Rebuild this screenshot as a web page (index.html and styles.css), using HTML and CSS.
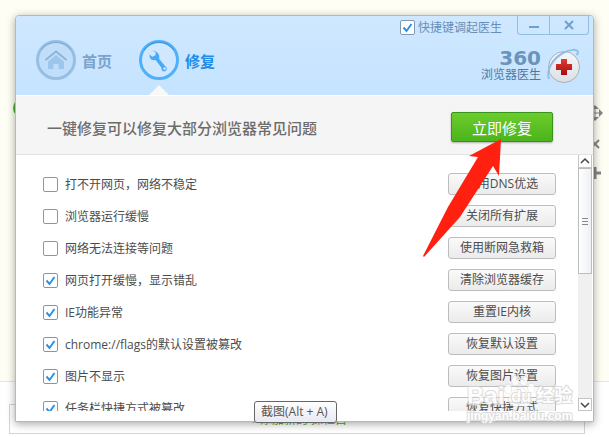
FILE: index.html
```html
<!DOCTYPE html>
<html lang="zh-CN">
<head>
    <meta charset="UTF-8">
    <meta name="viewport" content="width=device-width, initial-scale=1.0">
    <title>360浏览器医生</title>
    <link rel="stylesheet" href="styles.css">
</head>
<body>
    <!-- 底层页面 -->
    <div class="page">
        <div class="page-top">
            <span class="dot"></span>
            <svg class="side-tools" width="16" height="80" viewBox="0 0 16 80" fill="none" stroke="#858585" stroke-width="2">
                <path d="M2 9H15M8 3V15" stroke-width="1"/>
                <path d="M4 5L8 1l4 4zM4 13l4 4 4-4zM12 5l4 4-4 4z" fill="#858585" stroke="none"/>
                <path d="M4 36l8 8M12 36l-8 8"/>
                <path d="M2 69H14M8 63V75" stroke-width="3"/>
            </svg>
        </div>
        <div class="page-bottom">
            <div class="page-box">+ 添加新的 探栏目</div>
        </div>
    </div>

    <!-- 医生窗口 -->
    <div class="window">
        <header class="header">
            <nav class="nav">
                <a href="#" class="nav-item">
                    <svg class="nav-icon" width="40" height="40" viewBox="0 0 40 40">
                        <circle cx="20" cy="20" r="18.5" fill="#c0defa" stroke="#96bfe3" stroke-width="3"/>
                        <path d="M5 10A18.500 18.500 0 0 1 35 10" fill="none" stroke="#7da9cf"/>
                        <path d="M9.500 20L20 11.500L30.500 20" fill="none" stroke="#8cb5da" stroke-width="2"/>
                        <path d="M12 21.500L20 15l8 6.500V29H22.500V24h-5v5H12z" fill="#9cc6eb"/>
                    </svg>
                    <span>首页</span>
                </a>
                <a href="#" class="nav-item active">
                    <svg class="nav-icon" width="40" height="40" viewBox="0 0 40 40">
                        <circle cx="20" cy="20" r="18.500" fill="#d0e8ff" stroke="#4fb0fb" stroke-width="3"/>
                        <path d="M5 10A18.500 18.500 0 0 1 35 10" fill="none" stroke="#3c8fd8"/>
                        <path d="M13.500 10.500l3.300 1.800-.6 3.200-3 1.300-2.500-2.200c-.7 4 2 6.400 5.900 5.300l6 8.200c-.4 2.600 1.500 3.800 3.300 3.200 2-.6 2.700-3.600.6-4.800l-6.300-7.500c.8-4.600-1.700-8-6.700-8.500z" fill="#4aa9f6"/>
                        <circle cx="25.600" cy="28.600" r="1.300" fill="#d0e8ff"/>
                    </svg>
                    <span>修复</span>
                </a>
            </nav>
            <div class="header-right">
                <div class="controls">
                    <label class="hotkey"><input type="checkbox" checked>快捷键调起医生</label>
                    <div class="win-buttons">
                        <button type="button" aria-label="最小化">
                            <svg width="12" height="12" viewBox="0 0 12 12"><path d="M1 8h10" stroke="#6fa1cf" stroke-width="2"/></svg>
                        </button>
                        <button type="button" aria-label="关闭">
                            <svg width="12" height="12" viewBox="0 0 12 12"><path d="M2 2l8 8M10 2l-8 8" stroke="#6fa1cf" stroke-width="2"/></svg>
                        </button>
                    </div>
                </div>
                <div class="brand">
                    <div class="brand-text">
                        <strong>360</strong>
                        <span>浏览器医生</span>
                    </div>
                    <svg width="36" height="36" viewBox="0 0 36 36">
                        <defs>
                            <linearGradient id="ball" x1="0" y1="0" x2="0" y2="1">
                                <stop offset="0" stop-color="#f5f8fb"/>
                                <stop offset="1" stop-color="#dcdfe3"/>
                            </linearGradient>
                            <linearGradient id="cross" x1="0" y1="0" x2="0" y2="1">
                                <stop offset="0" stop-color="#e53a30"/>
                                <stop offset="1" stop-color="#a01010"/>
                            </linearGradient>
                        </defs>
                        <circle cx="19" cy="19" r="15.500" fill="url(#ball)" stroke="#a9b0b8"/>
                        <path d="M4 31C1 23 7 11 18 5C25 1 33 1 33 4c0 1-.5 2-1.500 3" fill="none" stroke="#91bfe6" stroke-width="2"/>
                        <path d="M16 11h6v5h5v6h-5v5h-6v-5h-5v-6h5z" fill="url(#cross)"/>
                    </svg>
                </div>
            </div>
        </header>

        <section class="banner">
            <h1>一键修复可以修复大部分浏览器常见问题</h1>
            <button type="button" class="btn-main">立即修复</button>
        </section>

        <main class="content">
            <ul class="list">
                <li><label><input type="checkbox">打不开网页，网络不稳定</label><button type="button" class="btn">使用DNS优选</button></li>
                <li><label><input type="checkbox">浏览器运行缓慢</label><button type="button" class="btn">关闭所有扩展</button></li>
                <li><label><input type="checkbox">网络无法连接等问题</label><button type="button" class="btn">使用断网急救箱</button></li>
                <li><label><input type="checkbox" checked>网页打开缓慢，显示错乱</label><button type="button" class="btn">清除浏览器缓存</button></li>
                <li><label><input type="checkbox" checked>IE功能异常</label><button type="button" class="btn">重置IE内核</button></li>
                <li><label><input type="checkbox" checked>chrome://flags的默认设置被篡改</label><button type="button" class="btn">恢复默认设置</button></li>
                <li><label><input type="checkbox" checked>图片不显示</label><button type="button" class="btn">恢复图片设置</button></li>
                <li><label><input type="checkbox" checked>任务栏快捷方式被篡改</label><button type="button" class="btn">恢复快捷方式</button></li>
            </ul>
            <div class="scrollbar">
                <button type="button" aria-label="向上">
                    <svg width="10" height="8" viewBox="0 0 10 8"><path d="M1 6l4-4 4 4" fill="none" stroke="#444" stroke-width="1.500"/></svg>
                </button>
                <div class="thumb"><i></i><i></i><i></i></div>
                <button type="button" class="down" aria-label="向下">
                    <svg width="10" height="8" viewBox="0 0 10 8"><path d="M1 2l4 4 4-4" fill="none" stroke="#444" stroke-width="1.500"/></svg>
                </button>
            </div>
        </main>

        <!-- 水印 -->
        <div class="watermark">
            <div class="wm-logo">
                <span class="wm-bai">Bai</span>
                <span class="paw">
                    <svg width="32" height="34" viewBox="0 0 34 34" fill="#fff" stroke="#d0d0d0">
                        <ellipse cx="4.500" cy="15" rx="3.500" ry="5"/>
                        <ellipse cx="12" cy="6" rx="3.500" ry="5"/>
                        <ellipse cx="21" cy="6" rx="3.500" ry="5"/>
                        <ellipse cx="29" cy="14" rx="3.500" ry="5"/>
                        <path d="M17 13c-5 0-6 5-9 8-5 5-3 12 3 12h12c6 0 8-7 3-12-3-3-4-8-9-8z"/>
                    </svg>
                    <b>du</b>
                </span>
                <span>经验</span>
            </div>
            <div class="wm-url">jingyan.baidu.com</div>
        </div>
    </div>

    <!-- 指向修复按钮的箭头 -->
    <svg class="arrow" width="80" height="120" viewBox="0 0 80 120">
        <path d="M78 1L46 18l9 1L25 69 0 118l1 1L37 79 70 28l6 10z" fill="#ff2010"/>
    </svg>

    <div class="tooltip">截图(Alt + A)</div>
</body>
</html>
```

FILE: styles.css
```css
* {
    margin: 0;
    padding: 0;
    box-sizing: border-box;
}

body {
    position: relative;
    height: 100vh;
    overflow: hidden;
    font-family: "Open Sans", "Noto Sans CJK SC", sans-serif;
    font-size: 12px;
    color: #4c4c4c;
}

button {
    font-family: inherit;
    cursor: pointer;
}

/* 底层页面 */
.page {
    height: 100%;
    display: flex;
    flex-direction: column;
    background: #fff;
}

.page-top {
    position: relative;
    flex: 1;
    background: #fffef4;
    border-bottom: 1px solid #e6e6e0;
}

.dot {
    position: absolute;
    left: 13px;
    top: 98px;
    width: 20px;
    height: 20px;
    border-radius: 50%;
    background: #45b535;
}

.side-tools {
    position: absolute;
    right: 6px;
    top: 104px;
}

.page-bottom {
    padding: 22px 24px 3px 9px;
}

.page-box {
    height: 30px;
    border: 1px solid #d4d4d4;
    line-height: 30px;
    padding-left: 240px;
    color: #4cae2f;
}

/* 窗口 */
.window {
    position: absolute;
    inset: 15px;
    display: flex;
    flex-direction: column;
    background: #fff;
    border: 1px solid #a9bccb;
    border-radius: 4px 4px 0 0;
    box-shadow: 0 2px 8px rgba(0, 0, 0, 0.35);
}

.header {
    display: flex;
    justify-content: space-between;
    height: 79px;
    background: linear-gradient(#cfe8ff, #c5e3ff);
    border-radius: 3px 3px 0 0;
}

.nav {
    display: flex;
    gap: 27px;
    padding: 24px 0 0 20px;
}

.nav-item {
    position: relative;
    display: flex;
    gap: 6px;
    height: 55px;
    color: #7ba3cc;
    font-size: 15px;
    font-weight: bold;
    line-height: 42px;
    text-decoration: none;
}

.nav-item.active {
    color: #1f8ce8;
}

.nav-item.active::after {
    content: '';
    position: absolute;
    left: 10px;
    bottom: 0;
    border: 10px solid transparent;
    border-top: 0;
    border-bottom-color: #f8f8f8;
}

.header-right {
    display: flex;
    flex-direction: column;
    align-items: flex-end;
    justify-content: space-between;
    padding: 0 4px 11px 0;
}

.controls {
    display: flex;
    gap: 15px;
}

.hotkey {
    display: flex;
    align-items: center;
    gap: 3px;
    padding-top: 2px;
    color: #6690b8;
}

.win-buttons {
    display: flex;
    height: 19px;
    border: 1px solid #92bde4;
    border-top: 0;
    border-radius: 0 0 4px 4px;
}

.win-buttons button {
    width: 31px;
    border: 0;
    background: none;
    line-height: 0;
}

.win-buttons button + button {
    width: 39px;
    border-left: 1px solid #92bde4;
}

.brand {
    display: flex;
    align-items: center;
    gap: 4px;
    padding-right: 8px;
}

.brand-text {
    display: flex;
    flex-direction: column;
    align-items: flex-end;
    color: #50779c;
    line-height: 17px;
}

.brand-text strong {
    font-family: "DejaVu Sans", sans-serif;
    font-size: 20px;
    line-height: 16px;
    color: #6b94ba;
}

/* 复选框 */
input[type="checkbox"] {
    appearance: none;
    width: 15px;
    height: 15px;
    border: 1px solid #7e99b2;
    border-radius: 2px;
    background: #fff;
}

input[type="checkbox"]:checked {
    background: #fff url("data:image/svg+xml,%3Csvg xmlns='http://www.w3.org/2000/svg' viewBox='0 0 13 13'%3E%3Cpath d='M2.500 6.500l3 3.500 5-7' fill='none' stroke='%232b90ee' stroke-width='2'/%3E%3C/svg%3E");
}

/* 一键修复 */
.banner {
    display: flex;
    align-items: center;
    justify-content: space-between;
    height: 60px;
    padding: 4px 40px 0 31px;
    background: #f5f5f5;
    border-top: 1px solid #fff;
    border-bottom: 1px solid #e2e2e2;
}

.banner h1 {
    font-size: 15px;
    font-weight: 500;
    color: #6c6c6c;
}

.btn-main {
    width: 102px;
    height: 30px;
    border: 1px solid #35941a;
    border-radius: 2px;
    background: linear-gradient(#6ccc2c, #4bb41c);
    box-shadow: 0 1px 2px rgba(0, 0, 0, 0.3);
    color: #fff;
    font-size: 15px;
}

/* 问题列表 */
.content {
    flex: 1;
    min-height: 0;
    display: flex;
    margin: 0 1px 10px 0;
}

.list {
    flex: 1;
    display: flex;
    flex-direction: column;
    gap: 10px;
    padding: 18px 22px 0 27px;
    overflow: hidden;
    list-style: none;
}

.list li {
    display: flex;
    flex-shrink: 0;
    align-items: center;
    justify-content: space-between;
    height: 22px;
}

.list label {
    display: flex;
    align-items: center;
    gap: 7px;
}

.btn {
    width: 108px;
    height: 22px;
    border: 1px solid #bdbdbd;
    border-radius: 3px;
    background: linear-gradient(#fafafa, #ebebeb);
    color: #4c4c4c;
    font-size: 12px;
    line-height: 20px;
}

.scrollbar {
    display: flex;
    flex-direction: column;
    width: 14px;
    background: #f0f0f0;
}

.scrollbar button {
    height: 13px;
    border: 1px solid #c4c4c4;
    border-top: 0;
    background: #fff;
    line-height: 0;
}

.scrollbar .down {
    margin-top: auto;
    border-top: 1px solid #c4c4c4;
}

.thumb {
    display: flex;
    flex-direction: column;
    align-items: center;
    justify-content: center;
    gap: 2px;
    height: 106px;
    border: 1px solid #bcbcbc;
    background: linear-gradient(to right, #fff, #eef0f4);
}

.thumb i {
    width: 6px;
    height: 1px;
    background: #888;
}

/* 水印 */
.watermark {
    position: absolute;
    right: 14px;
    bottom: -3px;
    width: 112px;
    opacity: 0.8;
    color: #fff;
    font-weight: bold;
    -webkit-text-stroke: 2px #d4d4d4;
    paint-order: stroke fill;
    pointer-events: none;
}

.wm-logo {
    display: flex;
    align-items: flex-end;
    font-family: "Liberation Sans", "Noto Sans CJK SC", sans-serif;
    font-size: 18px;
    line-height: 24px;
}

.wm-bai {
    font-size: 24px;
}

.paw {
    position: relative;
    line-height: 0;
}

.paw b {
    position: absolute;
    left: 7px;
    bottom: 11px;
    font-size: 16px;
}

.wm-url {
    font-family: "Liberation Sans", sans-serif;
    font-size: 12px;
    line-height: 16px;
}

/* 箭头 */
.arrow {
    position: absolute;
    right: 106px;
    top: 138px;
}

/* 提示 */
.tooltip {
    position: absolute;
    left: 254px;
    bottom: 14px;
    padding: 0 8px 0 6px;
    border: 1px solid #666;
    border-radius: 3px;
    background: linear-gradient(#fff, #e8e8f2);
    line-height: 20px;
    color: #555;
}
```
